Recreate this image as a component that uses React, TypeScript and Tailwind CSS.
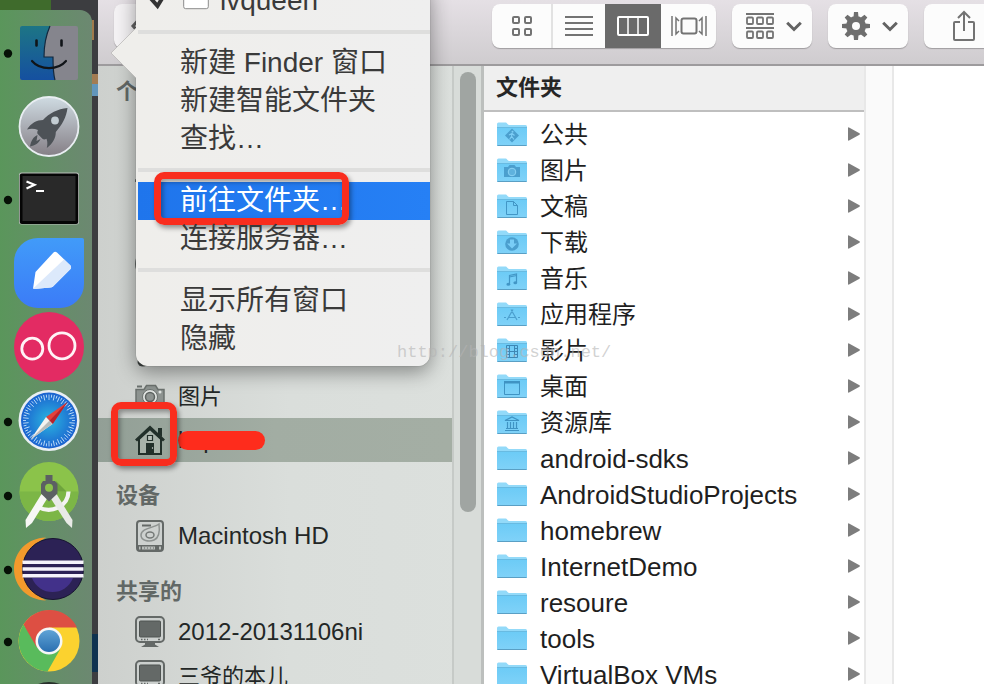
import clsx from "clsx";
import type { ReactNode } from "react";

type Folder = { name: string; latin?: boolean; glyph?: ReactNode };

const FOLDERS: Folder[] = [
  {
    name: "公共",
    glyph: (
      <>
        <path d="M15 6.500l7 7-7 7-7-7z" fill="#4b9fce" />
        <circle cx="15.500" cy="9.800" r="1" fill="#7dcdf5" />
        <path
          d="M15 11l-.5 3.500-2 3M14.500 14l2.500 3.500M12 13l3-1.500 2.500 2"
          stroke="#7dcdf5"
          strokeWidth="1.200"
          fill="none"
        />
      </>
    ),
  },
  {
    name: "图片",
    glyph: (
      <>
        <path
          d="M7 9h4l1.500-2h5L19 9h4v10H7z"
          fill="#4b9fce"
        />
        <circle cx="15" cy="14" r="3.800" fill="#5fb2de" stroke="#8bd3f5" />
      </>
    ),
  },
  {
    name: "文稿",
    glyph: (
      <path
        d="M9.500 7.500h7l4 4v9h-11zM16.500 7.500v4h4"
        fill="none"
        stroke="#4296c6"
      />
    ),
  },
  {
    name: "下载",
    glyph: (
      <>
        <circle cx="15" cy="14" r="6.800" fill="#4b9fce" />
        <path d="M13 9.500h4v4h3l-5 5-5-5h3z" fill="#79cdf6" />
      </>
    ),
  },
  {
    name: "音乐",
    glyph: (
      <>
        <path
          d="M12.500 18V9.500l7-1.500v8.500M12.500 11l7-1.500"
          fill="none"
          stroke="#4296c6"
          strokeWidth="1.200"
        />
        <ellipse cx="11.300" cy="18.200" rx="1.900" ry="1.500" fill="#4296c6" />
        <ellipse cx="18.300" cy="16.800" rx="1.900" ry="1.500" fill="#4296c6" />
      </>
    ),
  },
  {
    name: "应用程序",
    glyph: (
      <path
        d="M14 7.500l6 10.500M16 7.500L10 18M7 15.500h2M11.500 15.500h7M21 15.500h2"
        fill="none"
        stroke="#4b9fce"
        strokeWidth="1.200"
      />
    ),
  },
  {
    name: "影片",
    glyph: (
      <path
        d="M9.500 7.500h11v12h-11zM12.500 7.500v12M17.500 7.500v12M12.500 13.500h5M9.500 10.500h3M9.500 13.500h3M9.500 16.500h3M17.500 10.500h3M17.500 13.500h3M17.500 16.500h3"
        fill="none"
        stroke="#3d87b5"
      />
    ),
  },
  {
    name: "桌面",
    glyph: (
      <>
        <path d="M7.500 7.500h15v13h-15z" fill="none" stroke="#3f93c3" />
        <path d="M7 7h16v2.500H7z" fill="#3f93c3" />
      </>
    ),
  },
  {
    name: "资源库",
    glyph: (
      <path
        d="M8 10.500l7-3.500 7 3.500zM10.500 12v6M13.500 12v6M16.500 12v6M19.500 12v6M9 18.500h12M8 20.500h14"
        fill="none"
        stroke="#3f93c3"
        strokeWidth="1.200"
      />
    ),
  },
  { name: "android-sdks", latin: true },
  { name: "AndroidStudioProjects", latin: true },
  { name: "homebrew", latin: true },
  { name: "InternetDemo", latin: true },
  { name: "resoure", latin: true },
  { name: "tools", latin: true },
  { name: "VirtualBox VMs", latin: true },
];

function FolderIcon({ children }: { children?: ReactNode }) {
  return (
    <svg width="30" height="25" viewBox="0 0 30 25" className="shrink-0">
      <path
        d="M0 24V2a1.500 1.500 0 0 1 1.500-1.500h7.500c1 0 1.500 2.500 3 2.500h16.500a1.500 1.500 0 0 1 1.500 1.500V24z"
        fill="#93daf9"
      />
      <path
        d="M0 5.500h30V22.500a1.500 1.500 0 0 1-1.500 1.500h-27A1.500 1.500 0 0 1 0 22.500z"
        fill="url(#folder)"
      />
      <path d="M0 5.500h30" stroke="#68bbe2" />
      <path d="M.5 23.500h29" stroke="#5a9fc4" />
      {children}
    </svg>
  );
}

function FolderRow({ folder }: { folder: Folder }) {
  return (
    <li>
      <button
        type="button"
        className="flex h-9 w-full items-center gap-[13px] pr-1 pl-[13px] text-left"
      >
        <FolderIcon>{folder.glyph}</FolderIcon>
        <span
          className={clsx(
            "flex-1 pt-0.5 leading-9 whitespace-nowrap text-[#1f1f1f]",
            folder.latin ? "text-[26px]" : "text-2xl",
          )}
        >
          {folder.name}
        </span>
        <svg width="12" height="14" viewBox="0 0 12 14">
          <path d="M0 1Q0 0 1 .4L11.500 6.300q.7.700 0 1.400L1 13.600Q0 14 0 13z" fill="#7d7d7d" />
        </svg>
      </button>
    </li>
  );
}

/* Dock */

function Running({ cy }: { cy: number }) {
  return <circle cx="8" cy={cy} r="4.200" fill="#061006" />;
}

const TICKS = Array.from({ length: 60 }, (_, i) => i * 6);

const DOCK: { name: string; art: ReactNode }[] = [
  {
    name: "Finder",
    art: (
      <>
        <Running cy={39.5} />
        <rect x="20" y="12" width="58" height="54" rx="2" fill="#85858d" />
        <path
          d="M22 12h28c-4 9-6 20-6 31h9c0 8 0 16 2 23H22a2 2 0 0 1-2-2V14a2 2 0 0 1 2-2z"
          fill="url(#finder)"
        />
        <path
          d="M50 12c-4 9-6 20-6 31h9c0 8 0 16 2 23"
          fill="none"
          stroke="#12283e"
          strokeWidth="1.200"
        />
        <path d="M36.500 26.500v5M61.500 26.500v5" stroke="#101418" strokeWidth="2.600" strokeLinecap="round" />
        <path
          d="M32 47c8 9.500 26 9.500 34 0"
          fill="none"
          stroke="#101418"
          strokeWidth="2.200"
          strokeLinecap="round"
        />
      </>
    ),
  },
  {
    name: "Launchpad",
    art: (
      <>
        <circle cx="49" cy="38.500" r="29.500" fill="url(#silver)" stroke="#e9eef2" strokeWidth="1.800" />
        <path
          d="M67.500 20c-10 1-18 5-24.500 12-6 0-12 3-16 9.500 4-1.200 7.500-1 11 .5-.8 1.500-1 3-.3 4l5 5c1 .7 2.500.5 3.800-.3 1.200 3 1 6 .3 9.300 6-4.500 9-10 9-16C62 37 66.500 29 67.500 20z"
          fill="#4d5257"
        />
        <path
          d="M37.500 47c-4 1.500-6.500 6-7.500 11.500 5-.8 9-3.500 10.500-7.500l-4 2z"
          fill="#4d5257"
        />
        <circle cx="55" cy="32.500" r="3.900" fill="#c2ccd2" />
      </>
    ),
  },
  {
    name: "Terminal",
    art: (
      <>
        <Running cy={38} />
        <rect x="19" y="10.500" width="60" height="52" rx="2.500" fill="#b9bdb9" />
        <rect x="19.800" y="11.500" width="58.400" height="50.500" rx="2" fill="#050505" />
        <rect x="22.500" y="14" width="53" height="45" fill="#292929" />
        <path
          d="M26.500 19.500l8 3.300-8 3.700M36 29h8"
          fill="none"
          stroke="#fff"
          strokeWidth="2.200"
        />
      </>
    ),
  },
  {
    name: "Notes",
    art: (
      <>
        <path
          d="M38 2h44a2 2 0 0 1 2 2v44a24 24 0 0 1-24 24H38a24 24 0 0 1-24-24V26A24 24 0 0 1 38 2z"
          fill="url(#blue)"
        />
        <path
          d="M53.500 16.500q1.500-1.500 3.500 0l13.500 13q1.200 2 0 3.500L53 50.500q-1 1-3 1L34 53q-1 0-.8-1.500L35.500 36z"
          fill="#fff"
        />
        <path
          d="M64 23.500l6.500 6q1.200 2 0 3.500L53 50.500q-1 1-3 1L34 53q-.8-.2-.3-1z"
          fill="#dce9fb"
        />
      </>
    ),
  },
  {
    name: "Music",
    art: (
      <>
        <circle cx="49" cy="37" r="35" fill="#e32b63" />
        <circle cx="32.300" cy="38.700" r="10.500" fill="none" stroke="#fff3f6" strokeWidth="2.800" />
        <circle cx="62" cy="35.800" r="13" fill="none" stroke="#fff3f6" strokeWidth="2.800" />
      </>
    ),
  },
  {
    name: "Safari",
    art: (
      <>
        <Running cy={38} />
        <circle cx="49" cy="36.500" r="30.500" fill="#e9eff3" />
        <circle cx="49" cy="36.500" r="28" fill="url(#safari)" />
        {TICKS.map((deg) => (
          <path
            key={deg}
            d={deg % 12 ? "M49 10.500v3" : "M49 10.500v5.500"}
            stroke="#cfeafd"
            strokeWidth=".8"
            transform={`rotate(${deg} 49 36.500)`}
          />
        ))}
        <path d="M67.500 18L46 33l6.500 7z" fill="#e2413b" />
        <path d="M67.500 18L49.500 36.700l3.200 3.300z" fill="#b8222b" />
        <path d="M30.500 55.500L46 33l6.500 7z" fill="#f4f3f0" />
        <path d="M30.500 55.500L49.300 36.700l3.200 3.300z" fill="#b9bcbb" />
      </>
    ),
  },
  {
    name: "Android Studio",
    art: (
      <>
        <Running cy={38} />
        <circle cx="49" cy="33.500" r="29.500" fill="#8bc34a" />
        <path d="M19.500 33.500h59a29.500 29.500 0 0 1-59 0z" fill="#7cb646" />
        <path d="M56 23l10.500 10.500H57z" fill="#6ea33d" />
        <path
          d="M38 49c13 7 30 0 30.500-15.500"
          fill="none"
          stroke="#f4f4f2"
          strokeWidth="4.200"
        />
        <path d="M41.500 36l6 4-15.500 25-6 5-.5-8z" fill="#f7f7f5" />
        <path d="M50.500 40l6-4 16 26-.5 8-5.500-5z" fill="#e9eae7" />
        <path
          d="M45.500 17h7v6h2.500l2.500 3v9.500L49 43.500 41 35.500V26l2-3h2.500z"
          fill="#5c6063"
        />
        <circle cx="49" cy="29.800" r="4" fill="#8bc34a" />
      </>
    ),
  },
  {
    name: "Eclipse",
    art: (
      <>
        <Running cy={38} />
        <path
          d="M46 5.500C27 6 14 20 14 37s13 31 32 31.500C33 62 26 50 26 37s7-25 20-31.500z"
          fill="#f39a2c"
        />
        <circle cx="53" cy="37" r="30.500" fill="#2c2255" stroke="#171430" />
        <path d="M32 46h41a22 22 0 0 1-41 0z" fill="#42318a" />
        <path d="M22.500 30.200h61M22.500 37h61M22.500 43.800h61" stroke="#f5f3fb" strokeWidth="3.600" />
      </>
    ),
  },
  {
    name: "Chrome",
    art: (
      <>
        <Running cy={36} />
        <circle cx="49" cy="35" r="30.500" fill="#fbd22f" />
        <path d="M49 35L35 43.500 23.500 18.500A30.500 30.500 0 0 1 77 21.500H49z" fill="#dd4f43" />
        <path
          d="M23.500 18.500A30.500 30.500 0 0 0 47.500 65.400L60 43.500 36.500 41z"
          fill="#59bb5c"
        />
        <circle cx="49" cy="35" r="13.500" fill="#f6f7f7" />
        <circle cx="49" cy="35" r="11" fill="url(#chrome)" />
      </>
    ),
  },
  { name: "App", art: <circle cx="49" cy="32" r="30" fill="#28302b" /> },
];

function Gradients() {
  return (
    <svg width="0" height="0" className="absolute" aria-hidden="true">
      <defs>
        <linearGradient id="folder" x1="0" y1="0" x2="0" y2="1">
          <stop offset="0" stopColor="#6ccbf6" />
          <stop offset="1" stopColor="#80d2f8" />
        </linearGradient>
        <linearGradient id="finder" x1="0" y1="0" x2="0" y2="1">
          <stop offset="0" stopColor="#1d7585" />
          <stop offset="1" stopColor="#1550a0" />
        </linearGradient>
        <linearGradient id="silver" x1="0" y1="0" x2="0" y2="1">
          <stop offset="0" stopColor="#cfdbe2" />
          <stop offset="1" stopColor="#857f86" />
        </linearGradient>
        <linearGradient id="blue" x1="0" y1="0" x2="0" y2="1">
          <stop offset="0" stopColor="#419bf9" />
          <stop offset="1" stopColor="#3b7bf7" />
        </linearGradient>
        <radialGradient id="safari">
          <stop offset="0" stopColor="#2bb6e0" />
          <stop offset="1" stopColor="#1b62cf" />
        </radialGradient>
        <linearGradient id="chrome" x1="0" y1="0" x2="0" y2="1">
          <stop offset="0" stopColor="#5fa3d6" />
          <stop offset="1" stopColor="#2a6fb0" />
        </linearGradient>
      </defs>
    </svg>
  );
}

function Dock() {
  return (
    <aside className="flex w-[98px] shrink-0 flex-col bg-[#3c3d40]">
      <div className="h-[10px] w-[51px] shrink-0 bg-[#3f6b2c]" />
      <div className="flex min-h-0 flex-1">
        <nav className="w-[92px] overflow-hidden rounded-tr-xl bg-linear-to-r from-[#5a965b] to-[#6c8871] pt-1">
          {DOCK.map((app) => (
            <button key={app.name} type="button" aria-label={app.name} className="block">
              <svg width="92" height="74" viewBox="0 0 92 74">
                {app.art}
              </svg>
            </button>
          ))}
        </nav>
        <div className="flex flex-1 flex-col pt-[10px]">
          <div className="h-5 w-0.5 bg-[#a07b4c]" />
          <div className="mt-[34px] h-[10px] bg-[#a37c52]" />
          <div className="h-3 bg-[#6296bb]" />
          <div className="mt-auto mb-3 h-[38px] bg-[#0f3350]" />
        </div>
      </div>
    </aside>
  );
}

/* Toolbar */

const GROUP =
  "flex h-11 shrink-0 items-center overflow-hidden rounded-lg bg-[#fcfcfc] shadow-[0_1px_1px_rgba(0,0,0,0.25)]";

function Chevron() {
  return (
    <svg width="16" height="11" viewBox="0 0 16 11" fill="none" stroke="#636363" strokeWidth="3">
      <path d="M1.200 1.700l6.800 6.800 6.800-6.800" />
    </svg>
  );
}

function Toolbar() {
  return (
    <header className="flex h-[66px] shrink-0 items-start border-b-2 border-[#9d9b9d] bg-linear-to-b from-[#e5e0e5] to-[#cfcccf] pt-1">
      <div className="w-[394px] shrink-0 pl-4">
        <button
          type="button"
          aria-label="后退"
          className="flex h-11 w-14 items-center rounded-lg bg-[#f4f2f4] pl-4 shadow-[0_1px_1px_rgba(0,0,0,0.25)]"
        >
          <svg width="14" height="22" viewBox="0 0 14 22" fill="none" stroke="#636363" strokeWidth="3">
            <path d="M12 1L3 11l9 10" />
          </svg>
        </button>
      </div>
      <div className="flex min-w-0 flex-1 gap-4">
        <div className={GROUP}>
          <button
            type="button"
            aria-label="图标"
            className="flex h-full w-[61px] items-center justify-center border-r-2 border-[#e2e2e2]"
          >
            <svg width="20" height="20" viewBox="0 0 20 20" fill="none" stroke="#737373" strokeWidth="2">
              <rect x="1" y="1" width="6" height="6" rx="1" />
              <rect x="13" y="1" width="6" height="6" rx="1" />
              <rect x="1" y="13" width="6" height="6" rx="1" />
              <rect x="13" y="13" width="6" height="6" rx="1" />
            </svg>
          </button>
          <button
            type="button"
            aria-label="列表"
            className="flex h-full w-[52px] items-center justify-center"
          >
            <svg width="28" height="20" viewBox="0 0 28 20" stroke="#737373" strokeWidth="2">
              <path d="M0 1h28M0 7h28M0 13h28M0 19h28" />
            </svg>
          </button>
          <button
            type="button"
            aria-label="分栏"
            aria-pressed="true"
            className="flex h-full w-14 items-center justify-center bg-[#6a6a6a]"
          >
            <svg width="32" height="20" viewBox="0 0 32 20" fill="none" stroke="#fff" strokeWidth="2">
              <rect x="1" y="1" width="30" height="18" rx="1" />
              <path d="M11 1v18M21 1v18" strokeWidth="1.500" />
            </svg>
          </button>
          <button
            type="button"
            aria-label="Cover Flow"
            className="flex h-full w-[55px] items-center justify-center"
          >
            <svg width="36" height="20" viewBox="0 0 36 20" fill="none" stroke="#737373" strokeWidth="1.500">
              <rect x="10.500" y="2.500" width="15" height="15" rx="2" strokeWidth="2" />
              <path d="M1 0v20M35 0v20M8 5L5 2v16l3-3M28 5l3-3v16l-3-3" />
            </svg>
          </button>
        </div>
        <button type="button" aria-label="排列" className={clsx(GROUP, "w-20 gap-3 pl-[14px]")}>
          <svg width="28" height="26" viewBox="0 0 28 26" fill="none" stroke="#737373" strokeWidth="1.800">
            <path d="M0 1h28M0 15h28" />
            {[4.5, 18.500].map((y) =>
              [1, 11, 21].map((x) => (
                <rect key={`${x}-${y}`} x={x} y={y} width="6" height="6.500" rx="1" />
              )),
            )}
          </svg>
          <Chevron />
        </button>
        <button type="button" aria-label="操作" className={clsx(GROUP, "w-20 gap-3 pl-[14px]")}>
          <svg width="28" height="28" viewBox="0 0 28 28">
            <circle cx="14" cy="14" r="7" fill="none" stroke="#6e6e6e" strokeWidth="6" />
            {[0, 45, 90, 135, 180, 225, 270, 315].map((deg) => (
              <path
                key={deg}
                d="M11.500 5l.5-5h4l.5 5z"
                fill="#6e6e6e"
                transform={`rotate(${deg} 14 14)`}
              />
            ))}
          </svg>
          <Chevron />
        </button>
        <button type="button" aria-label="共享" className={clsx(GROUP, "w-20 justify-center")}>
          <svg width="22" height="32" viewBox="0 0 22 32" fill="none" stroke="#737373" strokeWidth="2">
            <path d="M7 12H2q-1 0-1 1v16q0 1 1 1h18q1 0 1-1V13q0-1-1-1h-5M11 21V2M5 8l6-6 6 6" />
          </svg>
        </button>
      </div>
    </header>
  );
}

/* Sidebar */

function CameraIcon() {
  return (
    <svg width="30" height="30" viewBox="0 0 30 30">
      <path d="M1 8.500h8l2.500-4h9l2.500 4h6v17H1z" fill="#8d9390" stroke="#6b716e" strokeWidth="1.500" />
      <path d="M2 5.500h5" stroke="#6b716e" strokeWidth="2" />
      <circle cx="15" cy="16" r="7.500" fill="#dfe3e0" stroke="#6b716e" />
      <circle cx="15" cy="16" r="4.500" fill="#8d9390" stroke="#5d6360" strokeWidth="1.500" />
      <circle cx="25" cy="11" r="1.500" fill="#dfe3e0" />
    </svg>
  );
}

function HomeIcon() {
  return (
    <svg width="30" height="30" viewBox="0 0 30 30">
      <path d="M4 14v15h22V14L15 4z" fill="#a7b2a9" stroke="#22302a" strokeWidth="2" />
      <path d="M23 3h4v9l-4-3z" fill="#22302a" />
      <path d="M1 15.500L15 2.500l14 13" fill="none" stroke="#22302a" strokeWidth="3" />
      <path d="M12.500 10.500h5v5h-5z" fill="#b7c0b8" stroke="#22302a" strokeWidth="1.200" />
      <path d="M11 18h8v11h-8z" fill="#22302a" />
      <circle cx="17.500" cy="23" r=".7" fill="#dfe3e0" />
    </svg>
  );
}

function DiskIcon() {
  return (
    <svg width="30" height="32" viewBox="0 0 30 32">
      <rect x="2" y="1" width="26" height="30" rx="3" fill="#cdd1cf" stroke="#646967" strokeWidth="2" />
      <path d="M2 25h26v3q0 3-3 3H5q-3 0-3-3z" fill="#646967" />
      <path d="M7 5.500h9" stroke="#646967" strokeWidth="2" />
      <path
        d="M24 4c-5 4-18 4-18 11 0 6 8 7 13 5s6-8 5-16z"
        fill="none"
        stroke="#8d9290"
        strokeWidth="1.500"
      />
      <ellipse cx="15" cy="15" rx="4" ry="3" fill="none" stroke="#747977" strokeWidth="1.500" />
      <path d="M4 28h1.500M7 28h13M24 28h2" stroke="#b9bebb" strokeWidth="3" />
      <path d="M9 28h1M12 28h1M15 28h1M18 28h1" stroke="#8d9290" strokeWidth="3" />
    </svg>
  );
}

function ComputerIcon() {
  return (
    <svg width="30" height="32" viewBox="0 0 30 32">
      <rect x="1" y="1" width="28" height="25" rx="4" fill="#ccd0ce" stroke="#646967" strokeWidth="2" />
      <rect x="4.500" y="5" width="21" height="16" rx="1" fill="#646967" stroke="#4f5452" />
      <path d="M6 23.500h1.500M9 23.500h1.500M12 23.500h1M23 23.500h2" stroke="#646967" strokeWidth="1.500" />
      <path d="M10 26.500h10v2l4 2.500H6l4-2.500z" fill="#646967" />
    </svg>
  );
}

function RingIcon() {
  return (
    <svg width="32" height="30" viewBox="0 0 32 30">
      <circle cx="16" cy="15" r="15" fill="none" stroke="#646967" strokeWidth="2" />
    </svg>
  );
}

function AppsIcon() {
  return (
    <svg width="32" height="30" viewBox="0 0 32 30" fill="none" stroke="#646967" strokeWidth="3">
      <path d="M17 4L4 26M15 4l13 22M0 20h5M10 20h12M27 20h5" />
    </svg>
  );
}

function NoteIcon() {
  return (
    <svg width="30" height="30" viewBox="0 0 30 30" fill="#3f4442">
      <ellipse cx="8" cy="25" rx="5.500" ry="4.500" />
      <ellipse cx="22" cy="22" rx="5.500" ry="4.500" />
      <path d="M10 5l17-4v21h-2V7L13 10v15h-3z" />
    </svg>
  );
}

function SidebarTitle({ children }: { children: ReactNode }) {
  return (
    <h2 className="pt-4 pl-[18px] text-[22px] leading-9 font-bold text-[#626866]">{children}</h2>
  );
}

function SidebarItem({
  icon,
  latin,
  selected,
  children,
}: {
  icon?: ReactNode;
  latin?: boolean;
  selected?: boolean;
  children?: ReactNode;
}) {
  return (
    <button
      type="button"
      className={clsx(
        "relative flex h-11 w-full items-center gap-[13px] pl-[37px] text-left whitespace-nowrap text-[#232726]",
        latin ? "text-2xl" : "text-[22px]",
        selected && "bg-linear-to-r from-[#929f96] via-[#a2ada3] to-[#a4aea4]",
      )}
    >
      <span className="flex w-[30px] shrink-0 justify-center">{icon}</span>
      {children}
    </button>
  );
}

function Sidebar() {
  return (
    <div className="flex w-[386px] shrink-0 border-r-3 border-[#bcbfbd] bg-linear-to-r from-[#cdd0cd] via-[#dadedb] to-[#dce0dd]">
      <div className="min-w-0 flex-1 border-r-2 border-[#c6cac7]">
        <h2 className="pt-2 pl-[18px] text-[22px] leading-9 font-bold text-[#626866]">个</h2>
        <SidebarItem />
        <SidebarItem icon={<AppsIcon />} />
        <SidebarItem />
        <SidebarItem icon={<RingIcon />} />
        <SidebarItem />
        <SidebarItem icon={<NoteIcon />} />
        <SidebarItem icon={<CameraIcon />}>图片</SidebarItem>
        <SidebarItem icon={<HomeIcon />} latin selected>
          lvqueen
          <span className="absolute top-[13px] left-20 h-[19px] w-[87px] rounded-full bg-[#fe2c1c]" />
          <span className="absolute -top-4 left-[13px] h-16 w-[66px] rounded-[10px] border-7 border-[#f92d1e] shadow-[2px_3px_5px_rgba(0,0,0,0.4),inset_2px_3px_5px_rgba(0,0,0,0.35)]" />
        </SidebarItem>
        <SidebarTitle>设备</SidebarTitle>
        <SidebarItem icon={<DiskIcon />} latin>
          Macintosh HD
        </SidebarItem>
        <SidebarTitle>共享的</SidebarTitle>
        <SidebarItem icon={<ComputerIcon />} latin>
          2012-20131106ni
        </SidebarItem>
        <SidebarItem icon={<ComputerIcon />}>三爷的本儿</SidebarItem>
      </div>
      <div className="w-[27px] shrink-0 bg-[#d8dcd9] px-[6px] pt-[6px]">
        <div className="h-[440px] w-4 rounded-full bg-[#a0a5a2]" />
      </div>
    </div>
  );
}

/* Dock menu */

function MenuItem({ children, active }: { children: ReactNode; active?: boolean }) {
  return (
    <button
      type="button"
      className={clsx(
        "relative flex h-[38px] w-full items-center pl-[42px] text-left text-[28px] whitespace-nowrap",
        active ? "bg-linear-to-r from-[#1f75ec] to-[#2680f5] text-white" : "text-[#3a3a3a]",
      )}
    >
      {children}
    </button>
  );
}

function Divider() {
  return <div className="my-[10px] h-1 bg-[#dededd]" />;
}

function DockMenu() {
  return (
    <div className="absolute -top-[18px] left-[136px] w-[294px] rounded-xl bg-linear-to-r from-[#efeeeb] to-[#efefef] pb-2 pl-0.5 shadow-[0_6px_20px_rgba(0,0,0,0.4),0_0_1px_rgba(0,0,0,0.5)]">
      <svg
        width="27"
        height="54"
        viewBox="0 0 27 54"
        className="absolute top-[44px] -left-[25px]"
      >
        <path d="M27 0L0 27l27 27z" fill="#efeeeb" />
        <path d="M25 2L0 27l25 25" fill="none" stroke="#b5b3b2" strokeWidth=".7" />
      </svg>
      <button
        type="button"
        className="flex h-[38px] items-center pl-[11px] text-[28px] text-[#3a3a3a]"
      >
        <svg width="18" height="20" viewBox="0 0 18 20" fill="none" stroke="#333" strokeWidth="4">
          <path d="M1.500 7l7 8L17 1" />
        </svg>
        <svg width="26" height="24" viewBox="0 0 26 24" className="ml-4">
          <rect x=".7" y=".7" width="24.600" height="19" rx="2" fill="#fff" stroke="#8b8b8b" />
        </svg>
        <span className="ml-[11px]">lvqueen</span>
      </button>
      <Divider />
      <MenuItem>新建 Finder 窗口</MenuItem>
      <MenuItem>新建智能文件夹</MenuItem>
      <MenuItem>查找…</MenuItem>
      <Divider />
      <MenuItem active>
        前往文件夹…
        <span className="absolute -top-[10px] left-4 h-[53px] w-[195px] rounded-[10px] border-7 border-[#f92d1e] shadow-[2px_3px_5px_rgba(0,0,0,0.4),inset_2px_3px_5px_rgba(0,0,0,0.35)]" />
      </MenuItem>
      <MenuItem>连接服务器…</MenuItem>
      <Divider />
      <MenuItem>显示所有窗口</MenuItem>
      <MenuItem>隐藏</MenuItem>
    </div>
  );
}

export default function App() {
  return (
    <div className="relative flex h-screen overflow-hidden [font-family:'Liberation_Sans','Noto_Sans_CJK_SC',sans-serif]">
      <Gradients />
      <Dock />
      <main className="flex min-w-0 flex-1 flex-col">
        <Toolbar />
        <div className="flex min-h-0 flex-1 overflow-hidden bg-white">
          <Sidebar />
          <section className="w-[380px] shrink-0">
            <h1 className="border-b-2 border-[#bfbfbf] bg-[#efefef] pl-3 text-[22px] leading-11 font-bold text-[#262626]">
              文件夹
            </h1>
            <ul className="pt-1">
              {FOLDERS.map((folder) => (
                <FolderRow key={folder.name} folder={folder} />
              ))}
            </ul>
          </section>
          <div className="w-[30px] shrink-0 border-x-2 border-[#e8e8e8] bg-[#fafafa]" />
        </div>
      </main>
      <DockMenu />
      <p className="pointer-events-none absolute top-[341px] left-[397px] [font-family:'Liberation_Mono',monospace] text-[17px] leading-6 text-[#b4b4b4]/60">
        http://blog.csdn.net/
      </p>
    </div>
  );
}
